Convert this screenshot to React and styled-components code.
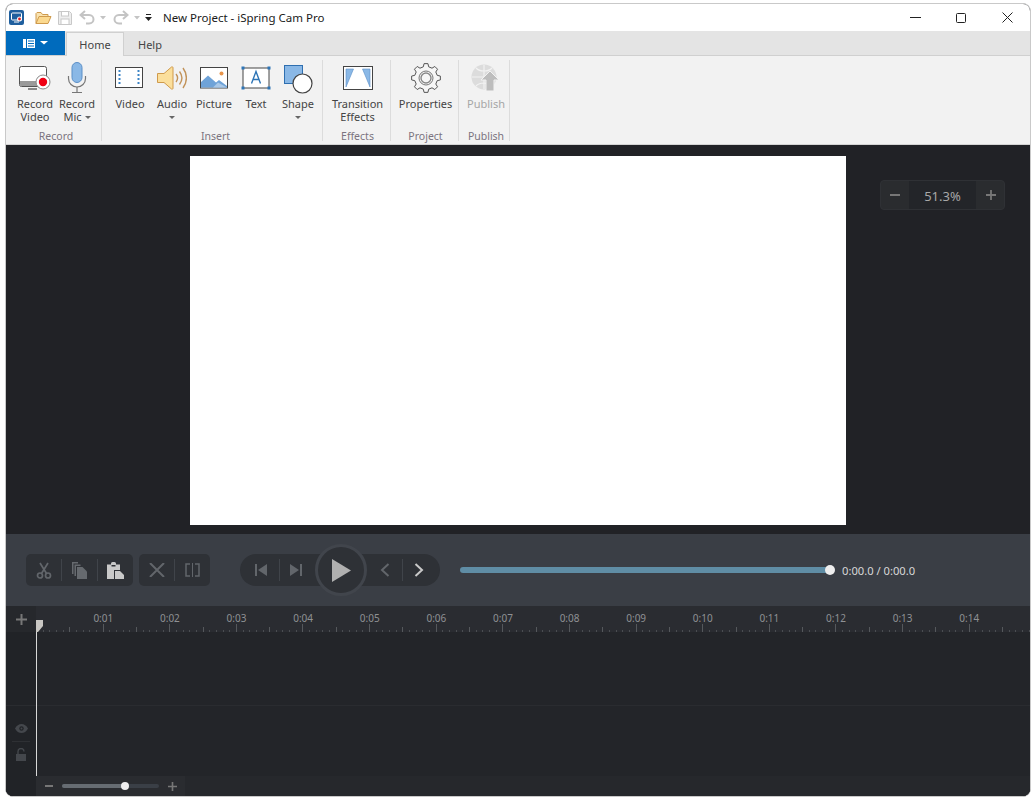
import React from 'react';
import styled, { createGlobalStyle } from 'styled-components';

const GlobalStyle = createGlobalStyle`
  html, body { margin: 0; padding: 0; background: #fff; }
  body { font-family: "Noto Sans", "Open Sans", sans-serif; }
`;

const Window = styled.div`
  box-sizing: border-box;
  width: 1026px;
  height: 794px;
  margin: 3px 0 0 5px;
  border: 1px solid #c9c9c9;
  border-radius: 8px;
  overflow: hidden;
  display: flex;
  flex-direction: column;
  background: #212226;
`;

const TitleBar = styled.div`
  height: 27px;
  flex: none;
  background: #fff;
  display: flex;
  align-items: center;
  padding-left: 3px;
`;

const QuickIcon = styled.span`
  display: flex;
  align-items: center;
  justify-content: center;
  width: ${p => p.$w}px;
  margin-right: ${p => p.$gap || 0}px;
`;

const TitleText = styled.div`
  margin-left: 11px;
  font-size: 11.5px;
  color: #1a1a1a;
  flex: 1;
`;

const WinButton = styled.div`
  width: 46px;
  height: 27px;
  display: flex;
  align-items: center;
  justify-content: center;
`;

const TabStrip = styled.div`
  height: 25px;
  flex: none;
  box-sizing: border-box;
  background: #e4e4e4;
  border-bottom: 1px solid #d0d0d0;
  display: flex;
  align-items: flex-end;
`;

const FileButton = styled.div`
  width: 59px;
  height: 24px;
  align-self: flex-start;
  background: #006bbd;
  display: flex;
  align-items: center;
  justify-content: center;
  gap: 5px;
`;

const Tab = styled.div`
  box-sizing: border-box;
  width: ${p => p.$w}px;
  height: 24px;
  margin-left: ${p => p.$left || 0}px;
  margin-bottom: -1px;
  display: flex;
  align-items: center;
  justify-content: center;
  font-size: 11px;
  color: #444;
  background: ${p => (p.$active ? '#f2f2f2' : 'transparent')};
  border: 1px solid ${p => (p.$active ? '#d0d0d0' : 'transparent')};
  border-bottom: none;
`;

const Ribbon = styled.div`
  height: 89px;
  flex: none;
  box-sizing: border-box;
  background: #f2f2f2;
  border-bottom: 1px solid #d4d4d4;
  display: flex;
  padding-top: 4px;
`;

const Group = styled.div`
  box-sizing: border-box;
  width: ${p => p.$w}px;
  height: 81px;
  border-right: 1px solid #dcdcdc;
  display: flex;
  flex-direction: column;
  padding-left: ${p => p.$pad || 0}px;
`;

const GroupButtons = styled.div`
  display: flex;
  flex: 1;
`;

const GroupLabel = styled.div`
  height: 17px;
  margin-left: ${p => p.$shift || 0}px;
  font-size: 10.5px;
  line-height: 25px;
  text-align: center;
  color: #7b7480;
`;

const RibbonButton = styled.div`
  width: ${p => p.$w || 42}px;
  display: flex;
  flex-direction: column;
  align-items: center;
  color: ${p => (p.$disabled ? '#a6a6a6' : '#444')};
  font-size: 11px;
  line-height: 13px;
  text-align: center;
  white-space: nowrap;
`;

const RibbonIcon = styled.div`
  height: 34px;
  margin: 1px 0 2px;
  display: flex;
  align-items: center;
  justify-content: center;
`;

const Caret = styled.span`
  display: ${p => (p.$block ? 'block' : 'inline-block')};
  width: 0;
  height: 0;
  margin: ${p => (p.$block ? '6px auto 0' : '0 0 2px 3px')};
  border-left: 3px solid transparent;
  border-right: 3px solid transparent;
  border-top: 3px solid #666;
`;

const Stage = styled.div`
  height: 389px;
  flex: none;
  background: #212226;
  display: flex;
  padding: 11px 0 0 184px;
  box-sizing: border-box;
`;

const Slide = styled.div`
  width: 656px;
  height: 369px;
  background: #fff;
`;

const ZoomBox = styled.div`
  box-sizing: border-box;
  width: 125px;
  height: 30px;
  margin: 24px 0 0 34px;
  border: 1px solid #2f3135;
  border-radius: 4px;
  background: #2a2c2f;
  display: flex;
  align-items: center;
  justify-content: space-between;
`;

const ZoomStep = styled.div`
  width: 28px;
  display: flex;
  align-items: center;
  justify-content: center;
  padding-left: ${p => p.$inset || 0}px;
  box-sizing: border-box;
`;

const ZoomValue = styled.div`
  flex: 1;
  height: 28px;
  line-height: 30px;
  background: #232529;
  text-align: center;
  font-size: 13px;
  color: #a8a8a8;
`;

const Toolbar = styled.div`
  height: 72px;
  flex: none;
  box-sizing: border-box;
  background: #3a3e45;
  display: flex;
  align-items: center;
  padding-left: 20px;
`;

const ToolGroup = styled.div`
  height: 32px;
  display: flex;
  align-items: center;
  background: #2e3136;
  border-radius: 5px;
  margin-right: 6px;
`;

const ToolCell = styled.div`
  width: ${p => p.$w || 36}px;
  height: 22px;
  display: flex;
  align-items: center;
  justify-content: center;
  padding: 0 ${p => p.$padRight || 0}px 0 ${p => p.$padLeft || 0}px;
  border-left: ${p => (p.$sep ? '1px solid #40444a' : 'none')};
  box-sizing: border-box;
`;

const Transport = styled.div`
  height: 32px;
  margin-left: 24px;
  display: flex;
  align-items: center;
  background: #2e3136;
  border-radius: 16px;
`;

const PlayButton = styled.div`
  box-sizing: border-box;
  width: 52px;
  height: 52px;
  flex: none;
  border-radius: 50%;
  background: #2e3136;
  border: 3px solid #41454c;
  display: flex;
  align-items: center;
  justify-content: center;
`;

const Progress = styled.div`
  width: 370px;
  height: 6px;
  margin-left: 20px;
  border-radius: 3px;
  background: #5f8da5;
  position: relative;
`;

const ProgressThumb = styled.div`
  position: absolute;
  right: -5px;
  top: -2px;
  width: 10px;
  height: 10px;
  border-radius: 50%;
  background: #eee;
`;

const TimeText = styled.div`
  margin-left: 12px;
  font-size: 11.2px;
  color: #d8d8d8;
`;

const Timeline = styled.div`
  flex: 1;
  display: flex;
  flex-direction: column;
  position: relative;
  background: #232529;
`;

const RulerRow = styled.div`
  height: 26px;
  flex: none;
  display: flex;
  background: #2a2c31;
`;

const RowHead = styled.div`
  width: 30px;
  flex: none;
  background: #26282c;
  display: flex;
  align-items: center;
  justify-content: center;
`;

const Ruler = styled.div`
  flex: 1;
  position: relative;
  display: flex;
  padding-left: 34px;
  overflow: hidden;
`;

const RulerLabel = styled.div`
  width: 66.62px;
  flex: none;
  height: 22px;
  line-height: 24px;
  font-size: 10px;
  color: #8f9194;
  text-align: center;
`;

const RulerTicks = styled.svg`
  position: absolute;
  left: 0;
  bottom: 0;
  display: block;
`;

const Tracks = styled.div`
  flex: 1;
  display: flex;
  min-height: 0;
`;

const TrackHead = styled.div`
  width: 30px;
  flex: none;
  background: #212327;
  display: flex;
  flex-direction: column;
  align-items: center;
  padding-bottom: 10px;
  box-sizing: border-box;
`;

const TrackIcon = styled.div`
  width: 18px;
  display: flex;
  justify-content: center;
  margin-top: ${p => (p.$sep ? '0' : 'auto')};
  padding: ${p => (p.$sep ? '6px 0 5px' : '0 0 8px')};
  border-top: ${p => (p.$sep ? '1px solid #2e3034' : 'none')};
`;

const TrackArea = styled.div`
  flex: 1;
`;

const TrackLine = styled.div`
  height: 74px;
  width: ${p => (p.$head ? '30px' : 'auto')};
  box-sizing: border-box;
  border-bottom: 1px solid #2a2c30;
`;

const Playhead = styled.div`
  position: absolute;
  left: 30px;
  top: 14px;
  bottom: 20px;
  width: 1px;
  background: #d8d8d8;
`;

const PlayheadCap = styled.svg`
  position: absolute;
  left: 30px;
  top: 14px;
`;

const BottomBar = styled.div`
  height: 20px;
  flex: none;
  display: flex;
  background: #26282c;
`;

const BottomCorner = styled.div`
  width: 30px;
  background: #212327;
`;

const ScaleBox = styled.div`
  width: 149px;
  background: #2a2c30;
  display: flex;
  align-items: center;
  padding-left: 9px;
  box-sizing: border-box;
`;

const ScaleTrack = styled.div`
  width: 97px;
  height: 4px;
  margin: 0 9px;
  border-radius: 2px;
  background: #3a3f46;
  position: relative;
`;

const ScaleFill = styled.div`
  height: 100%;
  width: 63px;
  border-radius: 2px;
  background: #666c72;
`;

const ScaleThumb = styled.div`
  position: absolute;
  left: 59px;
  top: -2px;
  width: 8px;
  height: 8px;
  border-radius: 50%;
  background: #eee;
`;

const Plus = ({ size = 11, color = '#777' }) => (
  <svg width={size} height={size} viewBox="0 0 11 11">
    <path d="M4.500 0h2v4.500H11v2H6.500V11h-2V6.500H0v-2h4.500z" fill={color} />
  </svg>
);

const Minus = ({ size = 8, color = '#777' }) => (
  <svg width={size} height="2" viewBox={`0 0 ${size} 2`} style={{ display: 'block' }}>
    <rect width={size} height="2" fill={color} />
  </svg>
);

const AppIcon = () => (
  <svg width="15" height="15" viewBox="0 0 15 15">
    <rect width="15" height="15" rx="2" fill="#1f5f9e" />
    <rect x="2.500" y="3" width="10" height="7" rx="1" fill="none" stroke="#fff" />
    <path d="M5 12h5" stroke="#fff" />
    <circle cx="10.500" cy="9" r="2.500" fill="#fff" />
    <circle cx="10.500" cy="9" r="1.400" fill="#e02020" />
  </svg>
);

const FolderIcon = () => (
  <svg width="17" height="14" viewBox="0 0 17 14">
    <path d="M1 12.500V2.500L2 1.500h4l1.500 2H13v2" fill="#f9e3b0" stroke="#cf9a4c" />
    <path d="M1 12.500L4 5.500h12l-3 7z" fill="#fbd98f" stroke="#cf9a4c" strokeLinejoin="round" />
  </svg>
);

const SaveIcon = () => (
  <svg width="14" height="14" viewBox="0 0 14 14" fill="none" stroke="#c8c8c8">
    <path d="M.5.5h11l2 2v11H.5z" fill="#eee" />
    <rect x="3.500" y=".5" width="7" height="4.500" fill="#fff" />
    <rect x="3" y="8" width="8" height="5.500" fill="#fff" />
  </svg>
);

const UndoIcon = ({ flip }) => (
  <svg width="16" height="15" viewBox="0 0 16 15" style={flip ? { transform: 'scaleX(-1)' } : undefined}>
    <path d="M6 1L1.500 5 6 9M2 5h8c6 0 6 8.500 0 8.500H7" fill="none" stroke="#c4c4c4" strokeWidth="2" />
  </svg>
);

const TinyCaret = ({ color = '#c4c4c4', size = 6 }) => (
  <svg width={size} height="4" viewBox="0 0 6 4" preserveAspectRatio="none"><path d="M0 0h6L3 3.500z" fill={color} /></svg>
);

const CustomizeIcon = () => (
  <svg width="7" height="7" viewBox="0 0 7 7" fill="#222">
    <rect x="1" y="0" width="5" height="1" />
    <path d="M0 3h7L3.500 7z" />
  </svg>
);

const FileMenuIcon = () => (
  <svg width="12" height="9" viewBox="0 0 12 9" fill="#fff">
    <rect width="3" height="9" />
    <rect x="4" width="8" height="9" />
    <path d="M5 2h6M5 4.500h6M5 7h6" stroke="#006bbd" />
  </svg>
);

const MonitorRecordIcon = () => (
  <svg width="34" height="32" viewBox="0 0 34 32">
    <rect x="1.500" y="4.500" width="27" height="20" rx="2" fill="#fff" stroke="#555" />
    <path d="M2 19h26v3.500a1.500 1.500 0 0 1-1.500 1.500h-23A1.500 1.500 0 0 1 2 22.500z" fill="#9a9a9a" />
    <rect x="10" y="26" width="9" height="2" fill="#888" />
    <circle cx="25" cy="20" r="7" fill="#fff" stroke="#888" />
    <circle cx="25" cy="20" r="4.200" fill="#f00014" />
  </svg>
);

const MicIcon = () => (
  <svg width="20" height="32" viewBox="0 0 20 32">
    <rect x="5" y="0.500" width="10" height="20" rx="5" fill="#8ab8e6" stroke="#5b8fc7" />
    <path d="M1.500 14v2.500a8.500 8.500 0 0 0 17 0V14" fill="none" stroke="#777" strokeWidth="1.200" />
    <path d="M10 25v5M5 30.500h10" stroke="#777" strokeWidth="1.200" />
  </svg>
);

const FilmIcon = () => (
  <svg width="30" height="22" viewBox="0 0 30 22">
    <rect x=".5" y=".5" width="27" height="20" fill="#fff" stroke="#444" />
    <path d="M4.500 3v16M23.500 3v16" stroke="#3d85c6" strokeWidth="2" strokeDasharray="2 2" />
  </svg>
);

const SpeakerIcon = () => (
  <svg width="30" height="26" viewBox="1 0 30 26">
    <path d="M1.500 8.500h6.500L15.500 2c1-.5 1.500 0 1.500 1v20c0 1-.5 1.500-1.500 1L8 17.500H1.500z" fill="#fbdf9c" stroke="#cf9a4c" strokeLinejoin="round" />
    <path d="M20 9c2 2.500 2 5.500 0 8M23.500 6.500c3 4 3 9 0 13M27 3c4.500 6 4.500 14 0 20" fill="none" stroke="#c2935a" strokeWidth="1.400" />
  </svg>
);

const PictureIcon = () => (
  <svg width="29" height="22" viewBox="0 0 29 22">
    <rect x=".5" y=".5" width="27" height="20.500" fill="#fff" stroke="#444" />
    <path d="M1 20.500V15l7-6.500 8 7 3-2.500 8 6v1.500z" fill="#6fa3d8" />
    <path d="M13 20.500l5-5 9 5z" fill="#a9c8e8" />
    <circle cx="21.500" cy="6.500" r="2" fill="#e8944a" />
  </svg>
);

const TextIcon = () => (
  <svg width="30" height="24" viewBox="0 0 30 24">
    <rect x="2" y="2" width="26" height="20" fill="#fff" stroke="#444" />
    <g fill="#2e75b6">
      <rect x=".5" y=".5" width="3" height="3" />
      <rect x="26.500" y=".5" width="3" height="3" />
      <rect x=".5" y="20.500" width="3" height="3" />
      <rect x="26.500" y="20.500" width="3" height="3" />
    </g>
    <path d="M10.500 17.500L15 5.500l4.500 12M12 13.500h6" fill="none" stroke="#2e75b6" strokeWidth="1.400" />
  </svg>
);

const ShapeIcon = () => (
  <svg width="30" height="33" viewBox="-1 -3 30 33">
    <rect x=".5" y=".5" width="18" height="18" fill="#8ab8e6" stroke="#2f6fb0" />
    <circle cx="18.500" cy="18.500" r="9.500" fill="#fff" stroke="#444" strokeWidth="1.200" />
  </svg>
);

const TransitionIcon = () => (
  <svg width="30" height="24" viewBox="0 0 30 24">
    <rect x=".5" y=".5" width="29" height="23" fill="#fff" stroke="#444" />
    <path d="M3 3h7.500L3 21zM27 3h-7.500L27 21z" fill="#8ab8e6" stroke="#5b8fc7" strokeWidth=".6" />
  </svg>
);

const gearPath = () => {
  const pts = [];
  const teeth = 8;
  for (let i = 0; i < teeth; i++) {
    const a = (i * 2 * Math.PI) / teeth;
    const step = (2 * Math.PI) / teeth;
    const at = (r, d) => `${(15 + r * Math.sin(a + d)).toFixed(2)} ${(15 - r * Math.cos(a + d)).toFixed(2)}`;
    pts.push(`${i === 0 ? 'M' : 'L'}${at(11.500, -step * 0.3)}`);
    pts.push(`L${at(14.500, -step * 0.17)}`);
    pts.push(`L${at(14.500, step * 0.17)}`);
    pts.push(`L${at(11.500, step * 0.3)}`);
  }
  return pts.join(' ') + 'Z';
};

const GearIcon = () => (
  <svg width="30" height="30" viewBox="0 0 30 30" fill="none">
    <path d={gearPath()} fill="#f6f6f6" stroke="#555" strokeLinejoin="round" />
    <circle cx="15" cy="15" r="7" stroke="#777" />
    <circle cx="15" cy="15" r="5" stroke="#888" strokeWidth="1.400" />
  </svg>
);

const PublishIcon = () => (
  <svg width="30" height="28" viewBox="0 0 30 28">
    <circle cx="13" cy="13" r="12.500" fill="#dcdcdc" />
    <path d="M1 13h24M13 1v24M5 4c4 4 12 4 16 0M5 22c4-4 12-4 16 0" fill="none" stroke="#f2f2f2" strokeWidth="1.200" />
    <path d="M19 7l9 9h-5v11h-8V16h-5z" fill="#bdbdbd" stroke="#f2f2f2" />
  </svg>
);

const ScissorsIcon = () => (
  <svg width="16" height="17" viewBox="0 0 16 17" fill="none" stroke="#62666b" strokeWidth="1.700">
    <path d="M4 1l6.500 10.500M12 1L5.500 11.500" />
    <circle cx="4" cy="13.500" r="2.500" />
    <circle cx="12" cy="13.500" r="2.500" />
  </svg>
);

const CopyIcon = () => (
  <svg width="15" height="17" viewBox="0 0 15 17" fill="#666a6f">
    <path d="M0 0h6v1.500H1.500V12H0z" />
    <path d="M2.500 2.500h6v1.500H4V14H2.500z" />
    <path d="M5 5h5.500L15 9.500V17H5z" />
  </svg>
);

const PasteIcon = () => (
  <svg width="17" height="17" viewBox="0 0 17 17" fill="#c9c9c9">
    <path d="M0 2.500h4V1.500A1.500 1.500 0 0 1 5.500 0h2A1.500 1.500 0 0 1 9 1.500v1h4V8H7v9H0z" />
    <path d="M8 9h5l4 4v4H8z" />
    <rect x="4.500" y="3" width="4" height="1.500" fill="#2e3136" />
  </svg>
);

const CrossIcon = () => (
  <svg width="16" height="14" viewBox="0 0 16 14">
    <path d="M1 0l14 14M15 0L1 14" stroke="#62666b" strokeWidth="2" />
  </svg>
);

const SplitIcon = () => (
  <svg width="15" height="14" viewBox="0 0 15 14" fill="none" stroke="#62666b" strokeWidth="1.500">
    <path d="M5 1H1v12h4M10 1h4v12h-4" />
    <path d="M7.500 0v14" strokeWidth="1" />
  </svg>
);

const SkipIcon = ({ flip }) => (
  <svg width="12" height="12" viewBox="0 0 12 12" fill="#62666b" style={flip ? { transform: 'scaleX(-1)' } : undefined}>
    <rect width="2" height="12" />
    <path d="M12 0v12L3 6z" />
  </svg>
);

const PlayIcon = () => (
  <svg width="19" height="23" viewBox="0 0 19 23">
    <path d="M0 0l19 11.500L0 23z" fill="#b0b0b0" />
  </svg>
);

const Chevron = ({ flip, color }) => (
  <svg width="10" height="14" viewBox="0 0 10 14" style={flip ? { transform: 'scaleX(-1)' } : undefined}>
    <path d="M1.500 1l6.500 6-6.500 6" fill="none" stroke={color} strokeWidth="2" />
  </svg>
);

const EyeIcon = () => (
  <svg width="13" height="9" viewBox="0 0 13 9">
    <path d="M0 4.500C3-1.500 10-1.500 13 4.500 10 10.500 3 10.500 0 4.500z" fill="#44474c" />
    <circle cx="6.500" cy="4.500" r="2.200" fill="#212327" />
    <circle cx="6.500" cy="4.500" r="1" fill="#44474c" />
  </svg>
);

const LockIcon = () => (
  <svg width="11" height="13" viewBox="0 0 11 13">
    <rect y="6" width="10" height="7" fill="#44474c" />
    <path d="M2 6V3.500a3 3 0 0 1 6 0" fill="none" stroke="#44474c" strokeWidth="1.400" />
  </svg>
);

const RULER_WIDTH = 994;
const TICK = 6.662;

const RulerMarks = () => {
  const ticks = [];
  for (let i = 0; i * TICK < RULER_WIDTH; i++) {
    const h = i % 10 === 0 ? 8 : i % 5 === 0 ? 5 : 2;
    const x = Math.round(i * TICK) + 0.5;
    ticks.push(<path key={i} d={`M${x} ${10 - h}V10`} stroke={i % 5 === 0 ? '#55585c' : '#4a4d51'} />);
  }
  return (
    <RulerTicks width={RULER_WIDTH} height="10" viewBox={`0 0 ${RULER_WIDTH} 10`}>
      {ticks}
    </RulerTicks>
  );
};

const labels = ['0:01', '0:02', '0:03', '0:04', '0:05', '0:06', '0:07', '0:08', '0:09', '0:10', '0:11', '0:12', '0:13', '0:14'];

export default function App() {
  return (
    <Window>
      <GlobalStyle />
      <TitleBar>
        <QuickIcon $w={15} $gap={11}><AppIcon /></QuickIcon>
        <QuickIcon $w={17} $gap={6}><FolderIcon /></QuickIcon>
        <QuickIcon $w={14} $gap={7}><SaveIcon /></QuickIcon>
        <QuickIcon $w={16} $gap={5}><UndoIcon /></QuickIcon>
        <QuickIcon $w={6} $gap={7}><TinyCaret /></QuickIcon>
        <QuickIcon $w={16} $gap={5}><UndoIcon flip /></QuickIcon>
        <QuickIcon $w={6} $gap={5}><TinyCaret /></QuickIcon>
        <QuickIcon $w={7}><CustomizeIcon /></QuickIcon>
        <TitleText>New Project - iSpring Cam Pro</TitleText>
        <WinButton>
          <svg width="11" height="1" viewBox="0 0 11 1"><rect width="11" height="1" fill="#222" /></svg>
        </WinButton>
        <WinButton>
          <svg width="10" height="10" viewBox="0 0 10 10"><rect x=".5" y=".5" width="9" height="9" rx="1" fill="none" stroke="#222" /></svg>
        </WinButton>
        <WinButton>
          <svg width="11" height="11" viewBox="0 0 11 11"><path d="M.5.500l10 10M10.500.500l-10 10" stroke="#222" /></svg>
        </WinButton>
      </TitleBar>

      <TabStrip>
        <FileButton>
          <FileMenuIcon />
          <TinyCaret color="#fff" size={8} />
        </FileButton>
        <Tab $active $left={1} $w={58}>Home</Tab>
        <Tab $w={52}>Help</Tab>
      </TabStrip>

      <Ribbon>
        <Group $w={96} $pad={8}>
          <GroupButtons>
            <RibbonButton>
              <RibbonIcon><MonitorRecordIcon /></RibbonIcon>
              Record<br />Video
            </RibbonButton>
            <RibbonButton>
              <RibbonIcon><MicIcon /></RibbonIcon>
              Record<br /><span>Mic<Caret /></span>
            </RibbonButton>
          </GroupButtons>
          <GroupLabel $shift={-3}>Record</GroupLabel>
        </Group>
        <Group $w={221} $pad={7}>
          <GroupButtons>
            <RibbonButton>
              <RibbonIcon><FilmIcon /></RibbonIcon>
              Video
            </RibbonButton>
            <RibbonButton>
              <RibbonIcon><SpeakerIcon /></RibbonIcon>
              Audio
              <Caret $block />
            </RibbonButton>
            <RibbonButton>
              <RibbonIcon><PictureIcon /></RibbonIcon>
              Picture
            </RibbonButton>
            <RibbonButton>
              <RibbonIcon><TextIcon /></RibbonIcon>
              Text
            </RibbonButton>
            <RibbonButton>
              <RibbonIcon><ShapeIcon /></RibbonIcon>
              Shape
              <Caret $block />
            </RibbonButton>
          </GroupButtons>
          <GroupLabel>Insert</GroupLabel>
        </Group>
        <Group $w={68} $pad={2}>
          <GroupButtons>
            <RibbonButton $w={65}>
              <RibbonIcon><TransitionIcon /></RibbonIcon>
              Transition<br />Effects
            </RibbonButton>
          </GroupButtons>
          <GroupLabel>Effects</GroupLabel>
        </Group>
        <Group $w={68} $pad={2}>
          <GroupButtons>
            <RibbonButton $w={66}>
              <RibbonIcon><GearIcon /></RibbonIcon>
              Properties
            </RibbonButton>
          </GroupButtons>
          <GroupLabel>Project</GroupLabel>
        </Group>
        <Group $w={51} $pad={4}>
          <GroupButtons>
            <RibbonButton $w={46} $disabled>
              <RibbonIcon><PublishIcon /></RibbonIcon>
              Publish
            </RibbonButton>
          </GroupButtons>
          <GroupLabel>Publish</GroupLabel>
        </Group>
      </Ribbon>

      <Stage>
        <Slide />
        <ZoomBox>
          <ZoomStep><Minus size={10} /></ZoomStep>
          <ZoomValue>51.3%</ZoomValue>
          <ZoomStep $inset={2}><Plus size={10} /></ZoomStep>
        </ZoomBox>
      </Stage>

      <Toolbar>
        <ToolGroup>
          <ToolCell $w={35}><ScissorsIcon /></ToolCell>
          <ToolCell $sep><CopyIcon /></ToolCell>
          <ToolCell $sep><PasteIcon /></ToolCell>
        </ToolGroup>
        <ToolGroup>
          <ToolCell $w={35}><CrossIcon /></ToolCell>
          <ToolCell $sep><SplitIcon /></ToolCell>
        </ToolGroup>
        <Transport>
          <ToolCell $w={39} $padLeft={3}><SkipIcon /></ToolCell>
          <ToolCell $w={36} $sep $padRight={4}><SkipIcon flip /></ToolCell>
          <PlayButton><PlayIcon /></PlayButton>
          <ToolCell $w={35}><Chevron flip color="#62666b" /></ToolCell>
          <ToolCell $w={38} $sep $padRight={6}><Chevron color="#c9c9c9" /></ToolCell>
        </Transport>
        <Progress><ProgressThumb /></Progress>
        <TimeText>0:00.0 / 0:00.0</TimeText>
      </Toolbar>

      <Timeline>
        <RulerRow>
          <RowHead><Plus /></RowHead>
          <Ruler>
            {labels.map(t => <RulerLabel key={t}>{t}</RulerLabel>)}
            <RulerMarks />
          </Ruler>
        </RulerRow>
        <Tracks>
          <TrackHead>
            <TrackLine $head />
            <TrackIcon><EyeIcon /></TrackIcon>
            <TrackIcon $sep><LockIcon /></TrackIcon>
          </TrackHead>
          <TrackArea>
            <TrackLine />
          </TrackArea>
        </Tracks>
        <BottomBar>
          <BottomCorner />
          <ScaleBox>
            <Minus />
            <ScaleTrack>
              <ScaleFill />
              <ScaleThumb />
            </ScaleTrack>
            <Plus size={9} />
          </ScaleBox>
        </BottomBar>
        <Playhead />
        <PlayheadCap width="7" height="12" viewBox="0 0 7 12">
          <path d="M0 0h7v6l-5 6H0z" fill="#c8c6c2" />
        </PlayheadCap>
      </Timeline>
    </Window>
  );
}
